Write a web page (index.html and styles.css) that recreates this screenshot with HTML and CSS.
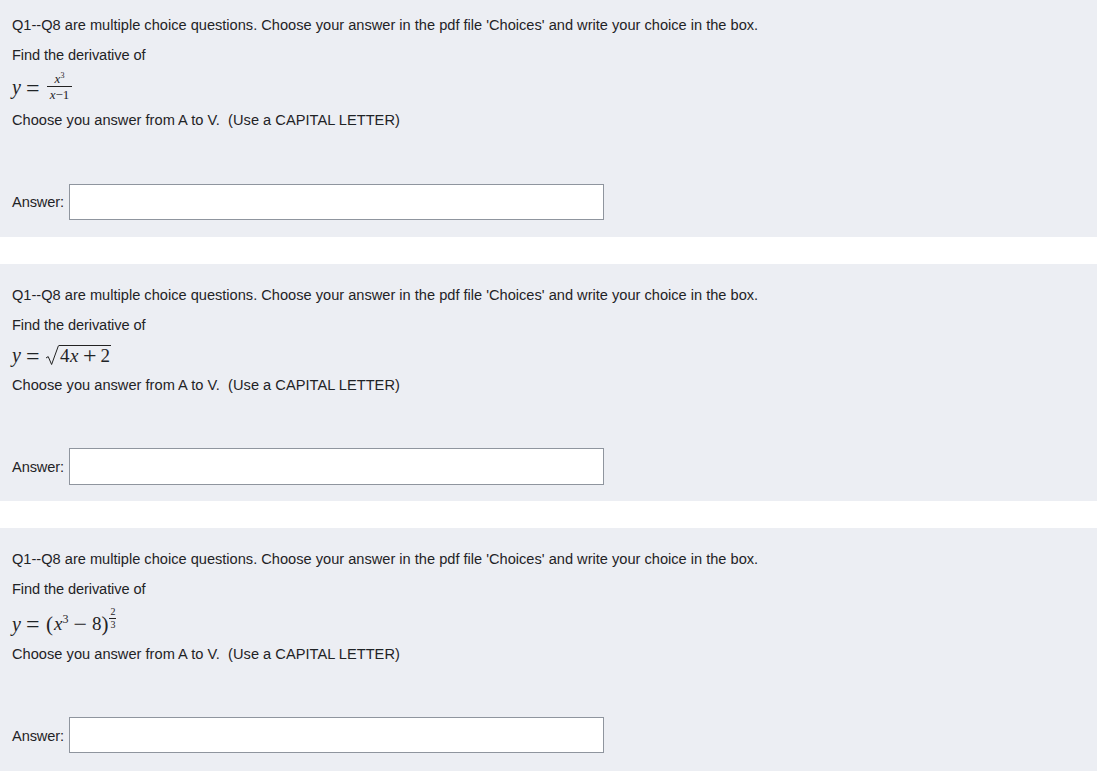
FILE: index.html
```html
<!DOCTYPE html>
<html lang="en">
<head>
<meta charset="utf-8">
<title>Quiz</title>
<link rel="stylesheet" href="styles.css">
</head>
<body>
<main class="quiz">
  <section class="card">
    <p class="line">Q1--Q8 are multiple choice questions. Choose your answer in the pdf file 'Choices' and write your choice in the box.</p>
    <p class="line line-find">Find the derivative of</p>
    <div class="math math-fraction">
      <i class="mi">y</i><span class="eq">=</span>
      <span class="frac">
        <span class="num"><i>x</i><sup>3</sup></span>
        <span class="den"><i>x</i>−1</span>
      </span>
    </div>
    <p class="line line-choose">Choose you answer from A to V.&nbsp; (Use a CAPITAL LETTER)</p>
    <div class="answer answer-first"><label class="answer-label">Answer:</label><input class="answer-input" type="text"></div>
  </section>
  <section class="card card-root">
    <p class="line">Q1--Q8 are multiple choice questions. Choose your answer in the pdf file 'Choices' and write your choice in the box.</p>
    <p class="line line-find">Find the derivative of</p>
    <div class="math math-root">
      <i class="mi">y</i><span class="eq">=</span>
      <svg class="radical" width="14" height="21" viewBox="0 0 14 21" aria-hidden="true"><path d="M1 13 L3.2 11.6 L6.6 19.5 L13.5 0.5" fill="none" stroke="#222" stroke-width="1"/></svg>
      <span class="radicand"><span>4<i>x</i></span><span class="op">+</span><span>2</span></span>
    </div>
    <p class="line line-choose">Choose you answer from A to V.&nbsp; (Use a CAPITAL LETTER)</p>
    <div class="answer"><label class="answer-label answer-label-low">Answer:</label><input class="answer-input answer-input-tall" type="text"></div>
  </section>
  <section class="card">
    <p class="line">Q1--Q8 are multiple choice questions. Choose your answer in the pdf file 'Choices' and write your choice in the box.</p>
    <p class="line line-find">Find the derivative of</p>
    <div class="math math-power">
      <i class="mi">y</i><span class="eq">=</span>
      <span class="paren paren-open">(</span><span class="base"><i>x</i><sup class="power">3</sup></span><span class="op">−</span><span>8</span><span class="paren">)</span>
      <span class="frac frac-exp"><span class="num">2</span><span class="den">3</span></span>
    </div>
    <p class="line line-choose">Choose you answer from A to V.&nbsp; (Use a CAPITAL LETTER)</p>
    <div class="answer"><label class="answer-label answer-label-low">Answer:</label><input class="answer-input" type="text"></div>
  </section>
</main>
</body>
</html>
```
FILE: styles.css
```css
* { box-sizing: border-box; }
html, body { margin: 0; padding: 0; background: #fff; }
body { font-family: "Liberation Sans", Arial, sans-serif; font-size: 14.62px; color: #1f2326; }
.quiz { display: flex; flex-direction: column; gap: 27px; margin-top: -6px; }
.card { background: #eceef3; padding: 16px 12px 17px; }
.card-root { padding-bottom: 16px; }
.line { margin: 0; height: 30px; line-height: 30px; white-space: nowrap; }
.line-find { letter-spacing: -0.1px; }
.line-choose { letter-spacing: 0.02px; }
.math { display: flex; align-items: center; height: 30px; font-family: "Liberation Serif", "Times New Roman", serif; font-size: 19px; color: #1f2326; }
.math-fraction { height: 35px; }
.math-root { padding-top: 1px; }
.math-power { height: 35px; padding-top: 5px; }
.mi { width: 14px; font-size: 20px; }
.eq { width: 19px; font-size: 24px; line-height: 20px; }
.frac { display: inline-flex; flex-direction: column; align-items: center; width: 25px; margin: -2px 0 0 2px; font-size: 13px; line-height: 12px; }
.num { display: block; width: 100%; height: 14px; border-bottom: 1px solid #222; text-align: center; }
.num sup { font-size: 8px; line-height: 0; vertical-align: 5px; }
.den { display: block; padding-top: 2px; }
.radicand { display: flex; height: 21px; line-height: 19px; padding: 0 1px; border-top: 1px solid #222; letter-spacing: 0.5px; }
.op { margin: 0 4px; font-size: 24px; letter-spacing: 0; }
.power { font-size: 12px; line-height: 0; vertical-align: 7px; }
.paren { font-size: 21px; line-height: 20px; }
.paren-open { margin-left: 1px; margin-right: 1px; }
.math-power .op { margin: 0 5px; line-height: 20px; }
.frac-exp { width: 7px; margin: -11px 0 0 1px; font-size: 10px; line-height: 10px; }
.frac-exp .num { height: 12px; }
.frac-exp .den { padding-top: 1px; }
.answer { display: flex; align-items: flex-start; gap: 5px; margin-top: 48px; }
.answer-first { margin-top: 49px; }
.answer-label { width: 52px; line-height: 36px; letter-spacing: -0.1px; white-space: nowrap; }
.answer-label-low { padding-top: 1px; }
.answer-input { display: block; width: 535px; height: 36px; margin: 0; padding: 0; background: #fff; border: 1px solid #8f959e; border-radius: 0; }
.answer-input-tall { height: 37px; }
```
